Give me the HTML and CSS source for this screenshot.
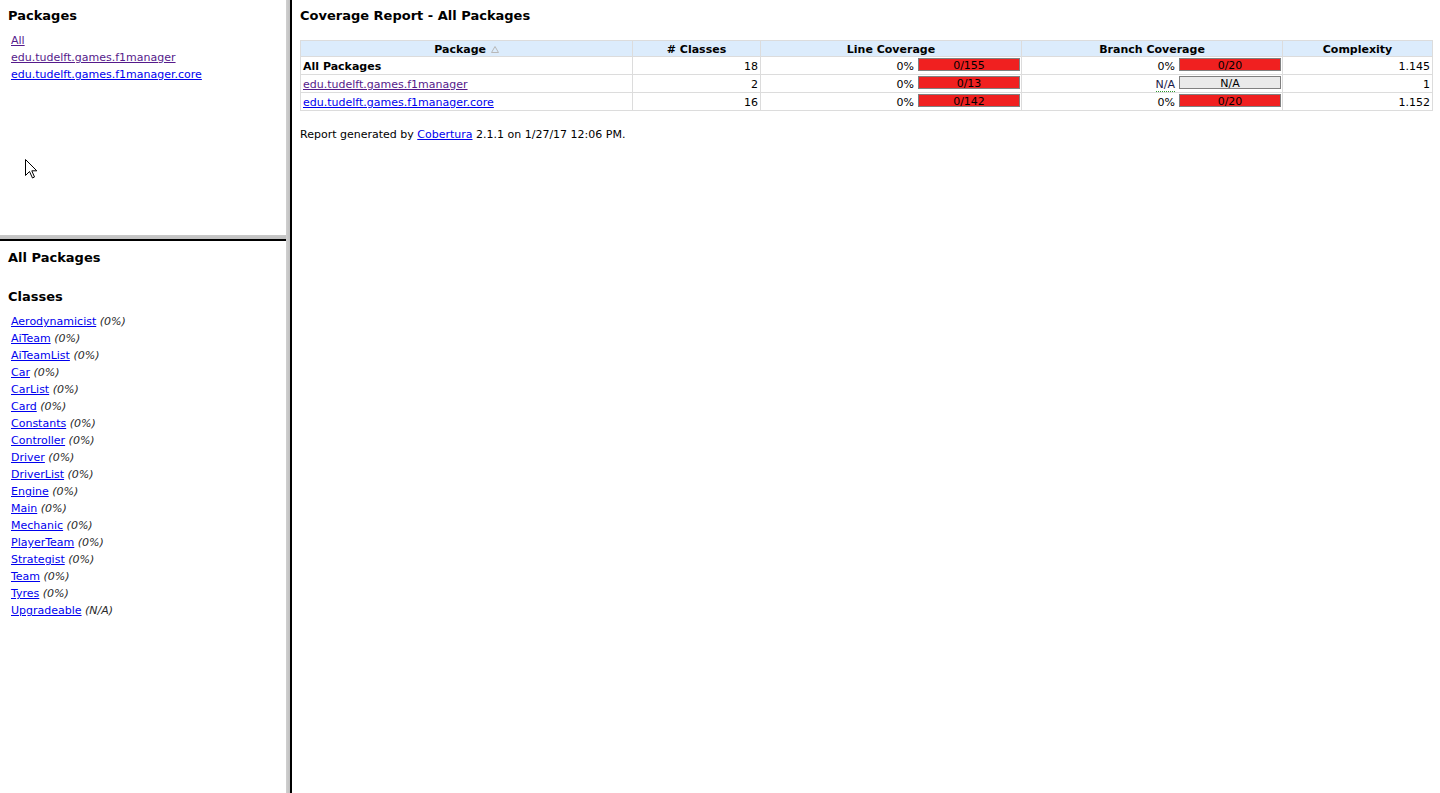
FILE: index.html
```html
<!DOCTYPE html>
<html>
<head>
<meta charset="utf-8">
<title>Coverage Report</title>
<link rel="stylesheet" href="styles.css">
</head>
<body>
<div class="frameset">
  <div class="left">
    <div class="pane pane-top">
      <h5 class="pane-title">Packages</h5>
      <ul class="list">
        <li><a class="visited" href="#">All</a></li>
        <li><a class="visited" href="#">edu.tudelft.games.f1manager</a></li>
        <li><a href="#">edu.tudelft.games.f1manager.core</a></li>
      </ul>
    </div>
    <div class="hsep"></div>
    <div class="pane pane-bottom">
      <h5 class="pane-title">All Packages</h5>
      <h5 class="pane-title classes-title">Classes</h5>
      <ul class="list list-classes">
        <li><a href="#">Aerodynamicist</a> <i>(0%)</i></li>
        <li><a href="#">AiTeam</a> <i>(0%)</i></li>
        <li><a href="#">AiTeamList</a> <i>(0%)</i></li>
        <li><a href="#">Car</a> <i>(0%)</i></li>
        <li><a href="#">CarList</a> <i>(0%)</i></li>
        <li><a href="#">Card</a> <i>(0%)</i></li>
        <li><a href="#">Constants</a> <i>(0%)</i></li>
        <li><a href="#">Controller</a> <i>(0%)</i></li>
        <li><a href="#">Driver</a> <i>(0%)</i></li>
        <li><a href="#">DriverList</a> <i>(0%)</i></li>
        <li><a href="#">Engine</a> <i>(0%)</i></li>
        <li><a href="#">Main</a> <i>(0%)</i></li>
        <li><a href="#">Mechanic</a> <i>(0%)</i></li>
        <li><a href="#">PlayerTeam</a> <i>(0%)</i></li>
        <li><a href="#">Strategist</a> <i>(0%)</i></li>
        <li><a href="#">Team</a> <i>(0%)</i></li>
        <li><a href="#">Tyres</a> <i>(0%)</i></li>
        <li><a href="#">Upgradeable</a> <i>(N/A)</i></li>
      </ul>
    </div>
  </div>
  <div class="vsep"></div>
  <div class="main">
    <h1 class="main-title">Coverage Report - All Packages</h1>
    <table class="report">
      <colgroup>
        <col class="c-pkg"><col class="c-cls"><col class="c-line"><col class="c-branch"><col class="c-cx">
      </colgroup>
      <thead>
        <tr>
          <td>Package <svg class="sort" width="8" height="7" viewBox="0 0 8 7"><path d="M0.5 6.5 L7.5 6.5 L4 0.5 Z" fill="none" stroke="#b8b8b8" stroke-width="1"/></svg></td>
          <td># Classes</td>
          <td><span class="tip">Line Coverage</span></td>
          <td><span class="tip">Branch Coverage</span></td>
          <td><span class="tip">Complexity</span></td>
        </tr>
      </thead>
      <tbody>
        <tr>
          <td class="name"><b>All Packages</b></td>
          <td class="num">18</td>
          <td class="graph"><div class="pg"><span class="pct">0%</span><div class="bar red"><span>0/155</span></div></div></td>
          <td class="graph"><div class="pg"><span class="pct">0%</span><div class="bar red"><span>0/20</span></div></div></td>
          <td class="num">1.145</td>
        </tr>
        <tr>
          <td class="name"><a class="visited" href="#">edu.tudelft.games.f1manager</a></td>
          <td class="num">2</td>
          <td class="graph"><div class="pg"><span class="pct">0%</span><div class="bar red"><span>0/13</span></div></div></td>
          <td class="graph"><div class="pg"><span class="pct"><span class="tip na-text">N/A</span></span><div class="bar na"><span>N/A</span></div></div></td>
          <td class="num">1</td>
        </tr>
        <tr>
          <td class="name"><a href="#">edu.tudelft.games.f1manager.core</a></td>
          <td class="num">16</td>
          <td class="graph"><div class="pg"><span class="pct">0%</span><div class="bar red"><span>0/142</span></div></div></td>
          <td class="graph"><div class="pg"><span class="pct">0%</span><div class="bar red"><span>0/20</span></div></div></td>
          <td class="num">1.152</td>
        </tr>
      </tbody>
    </table>
    <p class="footer">Report generated by <a href="#">Cobertura</a> 2.1.1 on 1/27/17 12:06 PM.</p>
  </div>
</div>
<svg class="cursor" width="13" height="20" viewBox="0 0 13 20"><path d="M0.5 0.5 L0.5 16.5 L4.5 12.5 L7.5 19 L9.5 18 L6.8 11.8 L11.8 11.8 Z" fill="#fff" stroke="#000" stroke-width="1" stroke-linejoin="miter"/></svg>
</body>
</html>
```

FILE: styles.css
```css
html, body {
  margin: 0;
  padding: 0;
  background: #fff;
}
body {
  font-family: "DejaVu Sans", Verdana, sans-serif;
  font-size: 11px;
  color: #000;
  overflow: hidden;
}
a {
  color: #0000ee;
  text-decoration: underline;
}
a.visited {
  color: #551a8b;
}
.frameset {
  display: flex;
  height: 793px;
  overflow: hidden;
}
.left {
  width: 286px;
  flex: 0 0 286px;
  display: flex;
  flex-direction: column;
}
.pane {
  box-sizing: border-box;
  padding: 8px;
}
.pane-top {
  height: 235px;
}
.hsep {
  height: 6px;
  flex: 0 0 6px;
  background: linear-gradient(to bottom, #c8c8c8 0, #c0c0c0 4px, #000 4px, #000 6px);
}
.pane-bottom {
  flex: 1;
  padding-top: 9px;
}
.vsep {
  width: 6px;
  flex: 0 0 6px;
  background: linear-gradient(to right, #d0d0d0 0, #c0c0c0 4px, #000 4px, #000 6px);
}
.pane-title {
  margin: 0;
  font-size: 13px;
  font-weight: bold;
  line-height: 15px;
}
.classes-title {
  margin-top: 24px;
}
.list {
  list-style: none;
  margin: 9px 0 0;
  padding: 0;
}
.list-classes {
  margin-top: 9px;
}
.list li {
  height: 17px;
  line-height: 17px;
  padding-left: 3px;
  white-space: nowrap;
}
.list i {
  color: #2a2a2a;
}
.main {
  flex: 1;
  padding: 8px;
  min-width: 0;
}
.main-title {
  margin: 0;
  font-size: 13px;
  font-weight: bold;
  line-height: 15px;
}
.report {
  margin-top: 17px;
  width: 1132px;
  border-collapse: collapse;
  table-layout: fixed;
}
.c-pkg { width: 332px; }
.c-cls { width: 128px; }
.c-line { width: 261px; }
.c-branch { width: 261px; }
.c-cx { width: 150px; }
.report td {
  border: 1px solid #dcdcdc;
  padding: 3px 2px 0;
  height: 14px;
  line-height: 13px;
  vertical-align: top;
  white-space: nowrap;
  overflow: hidden;
}
.report thead td {
  background: #dcecfc;
  font-weight: bold;
  text-align: center;
  padding-top: 2px;
  height: 13px;
}
.sort {
  vertical-align: 0px;
  margin-left: 1px;
}
.tip {
  border-bottom: 1px dotted #2e9b2e;
}
.report td.num {
  text-align: right;
}
.report td.graph {
  padding: 0 1px 0 2px;
  height: 17px;
}
.pg {
  display: flex;
  justify-content: flex-end;
  align-items: flex-start;
  height: 17px;
}
.pct {
  line-height: 13px;
  margin-top: 3px;
}
.na-text {
  color: #1a1a4a;
}
.bar {
  box-sizing: border-box;
  display: flex;
  justify-content: center;
  align-items: center;
  width: 102px;
  height: 13px;
  margin-left: 4px;
  margin-top: 1px;
  padding-top: 2px;
  border: 1px solid #808080;
  line-height: 11px;
  color: #000;
}
.bar.red {
  background: #f02020;
}
.bar.na {
  background: #eaeaea;
}
.footer {
  margin: 17px 0 0;
  line-height: 13px;
}
.cursor {
  position: absolute;
  left: 25px;
  top: 159px;
}
```
